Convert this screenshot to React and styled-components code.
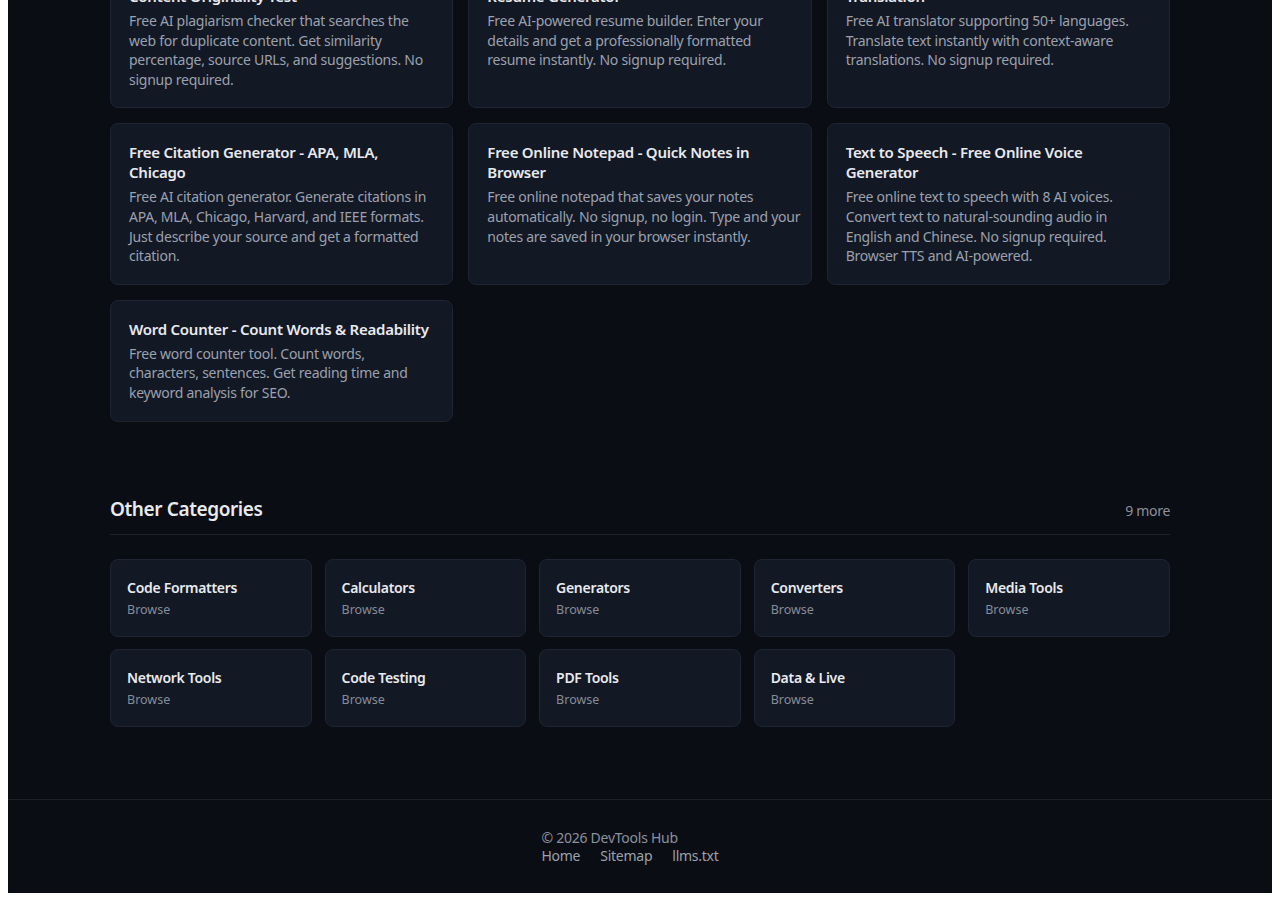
import React from 'react';
import styled, { createGlobalStyle } from 'styled-components';

// lines are kept as the reference wraps them
const tools = [
  {
    title: ['Content Originality Test'],
    desc: [
      'Free AI plagiarism checker that searches the',
      'web for duplicate content. Get similarity',
      'percentage, source URLs, and suggestions. No',
      'signup required.',
    ],
  },
  {
    title: ['Resume Generator'],
    desc: [
      'Free AI-powered resume builder. Enter your',
      'details and get a professionally formatted',
      'resume instantly. No signup required.',
    ],
  },
  {
    title: ['Translation'],
    desc: [
      'Free AI translator supporting 50+ languages.',
      'Translate text instantly with context-aware',
      'translations. No signup required.',
    ],
  },
  {
    title: ['Free Citation Generator - APA, MLA,', 'Chicago'],
    desc: [
      'Free AI citation generator. Generate citations in',
      'APA, MLA, Chicago, Harvard, and IEEE formats.',
      'Just describe your source and get a formatted',
      'citation.',
    ],
  },
  {
    title: ['Free Online Notepad - Quick Notes in', 'Browser'],
    desc: [
      'Free online notepad that saves your notes',
      'automatically. No signup, no login. Type and your',
      'notes are saved in your browser instantly.',
    ],
  },
  {
    title: ['Text to Speech - Free Online Voice', 'Generator'],
    desc: [
      'Free online text to speech with 8 AI voices.',
      'Convert text to natural-sounding audio in',
      'English and Chinese. No signup required.',
      'Browser TTS and AI-powered.',
    ],
  },
  {
    title: ['Word Counter - Count Words & Readability'],
    desc: [
      'Free word counter tool. Count words,',
      'characters, sentences. Get reading time and',
      'keyword analysis for SEO.',
    ],
  },
];

const categories = [
  'Code Formatters',
  'Calculators',
  'Generators',
  'Converters',
  'Media Tools',
  'Network Tools',
  'Code Testing',
  'PDF Tools',
  'Data & Live',
];

const GlobalStyle = createGlobalStyle`
  body {
    margin: 0 8px 8px;
    font-family: "Noto Sans", "Open Sans", sans-serif;
    letter-spacing: -0.25px;
  }
  * {
    box-sizing: border-box;
  }
`;

export default function App() {
  return (
    <>
      <GlobalStyle />
      <Page>
        <Main>
          <ToolGrid>
            {tools.map((t) => (
              <ToolCard key={t.title.join(' ')} href='#'>
                <ToolTitle>
                  {t.title.map((l) => (
                    <Line key={l}>{l}</Line>
                  ))}
                </ToolTitle>
                <ToolDesc>
                  {t.desc.map((l) => (
                    <Line key={l}>{l}</Line>
                  ))}
                </ToolDesc>
              </ToolCard>
            ))}
          </ToolGrid>

          <Section>
            <SectionHead>
              <SectionTitle>Other Categories</SectionTitle>
              <More>9 more</More>
            </SectionHead>
            <CatGrid>
              {categories.map((c) => (
                <CatCard key={c} href='#'>
                  <CatName>{c}</CatName>
                  <CatBrowse>Browse</CatBrowse>
                </CatCard>
              ))}
            </CatGrid>
          </Section>
        </Main>

        <Footer>
          <FooterInner>
            <Copy>© 2026 DevTools Hub</Copy>
            <FooterLinks>
              <FooterLink href='#'>Home</FooterLink>
              <FooterLink href='#'>Sitemap</FooterLink>
              <FooterLink href='#'>llms.txt</FooterLink>
            </FooterLinks>
          </FooterInner>
        </Footer>
      </Page>
    </>
  );
}

// page is shown scrolled to its bottom: the top of the first card row is clipped
const Page = styled.div`
  background: #0b0d14;
  color: #e5e7eb;
  overflow: hidden;
`;

const Main = styled.main`
  max-width: 1060px;
  margin: -33px auto 0;
  padding-bottom: 72px;
`;

const ToolGrid = styled.div`
  display: grid;
  grid-template-columns: repeat(3, minmax(0, 1fr));
  gap: 15px;
`;

const ToolCard = styled.a`
  display: block;
  min-width: 0;
  background: #131825;
  border: 1px solid #1e2433;
  border-radius: 8px;
  padding: 18px;
  text-decoration: none;
`;

const Line = styled.span`
  display: block;
  white-space: nowrap;
`;

const ToolTitle = styled.h3`
  margin: 0;
  font-size: 15px;
  line-height: 20px;
  font-weight: 600;
  letter-spacing: -0.25px;
  color: #e8eaee;
`;

const ToolDesc = styled.p`
  margin: 5px 0 0;
  font-size: 14px;
  line-height: 19.6px;
  color: #9ba1ad;
`;

const Section = styled.section`
  margin-top: 74px;
`;

const SectionHead = styled.div`
  display: flex;
  justify-content: space-between;
  align-items: baseline;
  padding-bottom: 12px;
  border-bottom: 1px solid #1c212c;
`;

const SectionTitle = styled.h2`
  margin: 0;
  font-size: 19px;
  line-height: 26px;
  font-weight: 600;
  letter-spacing: -0.4px;
  color: #e8eaee;
`;

const More = styled.span`
  font-size: 14px;
  letter-spacing: -0.3px;
  color: #8b919c;
`;

const CatGrid = styled.div`
  display: grid;
  grid-template-columns: repeat(5, minmax(0, 1fr));
  gap: 12.8px;
  margin-top: 24px;
`;

const CatCard = styled.a`
  display: block;
  background: #131825;
  border: 1px solid #1e2433;
  border-radius: 8px;
  padding: 18px 16px;
  text-decoration: none;
`;

const CatName = styled.div`
  font-size: 14px;
  line-height: 20px;
  font-weight: 600;
  letter-spacing: -0.3px;
  color: #e8eaee;
`;

const CatBrowse = styled.div`
  margin-top: 4px;
  font-size: 12.5px;
  line-height: 16px;
  letter-spacing: 0;
  color: #868c97;
`;

const Footer = styled.footer`
  border-top: 1px solid #1c212c;
  padding: 29px 0 28px;
  display: flex;
  justify-content: center;
`;

const FooterInner = styled.div`
  font-size: 14px;
  line-height: 18px;
`;

const Copy = styled.div`
  color: #8b919c;
`;

const FooterLinks = styled.nav`
  display: flex;
`;

const FooterLink = styled.a`
  margin-right: 20px;
  color: #9ba1ad;
  text-decoration: none;
`;
